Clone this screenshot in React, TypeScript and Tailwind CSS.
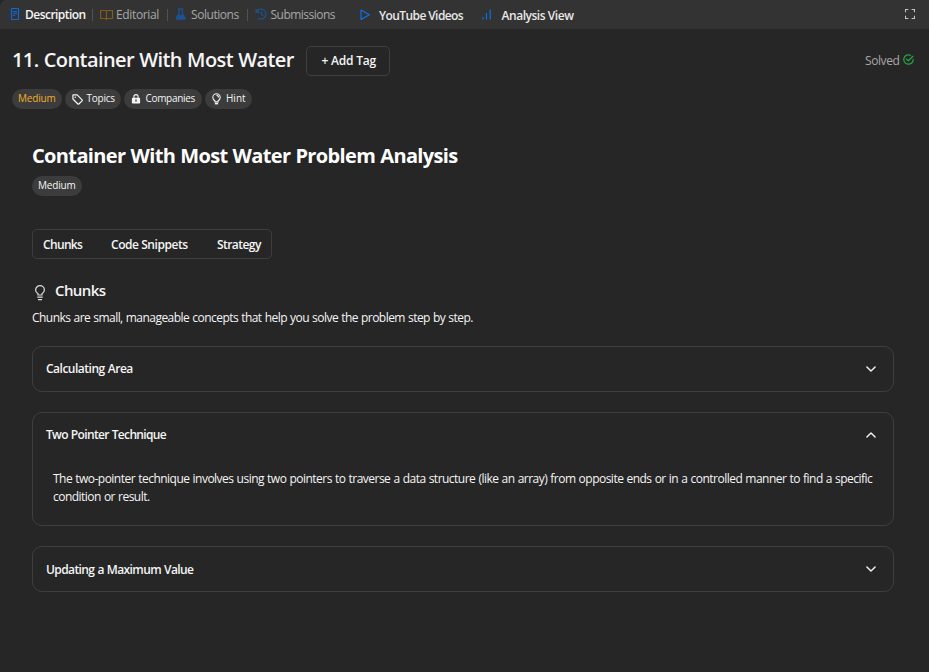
import type { ReactNode } from 'react';

type IconProps = { className?: string };

const DocIcon = ({ className }: IconProps) => (
  <svg className={className} width="10" height="12" viewBox="0 0 10 12" fill="none" stroke="currentColor">
    <rect x="1.5" y="0.5" width="7" height="11" rx="0.8" strokeWidth="1.2" />
    <path d="M3 3.5h4M3 5.5h4M3 7.5h2.2" />
  </svg>
);

const BookIcon = ({ className }: IconProps) => (
  <svg className={className} width="14" height="12" viewBox="0 0 14 12" fill="none" stroke="currentColor" strokeWidth="1.2" strokeLinejoin="round">
    <path d="M6.5 2.2C6.2 1.5 5.8 1.5 5.1 1.5H.6v8h4.5c.8 0 1.1.2 1.4.9.3-.7.7-.9 1.4-.9h4.6v-8H7.9c-.7 0-1.1 0-1.4.7zM6.5 2.2v8.2" />
  </svg>
);

const FlaskIcon = ({ className }: IconProps) => (
  <svg className={className} width="12" height="12" viewBox="0 0 12 12" fill="none" stroke="currentColor" strokeWidth="1.2">
    <path d="M2.9 .8h5.6M4.2 1v4L1.3 10c-.3.6 0 1.2.7 1.2h7.4c.7 0 1-.6.7-1.2L7.2 5V1" />
    <path d="M3.4 6.8h4.8l2 4.2H1.3z" fill="currentColor" stroke="none" />
  </svg>
);

const HistoryIcon = ({ className }: IconProps) => (
  <svg className={className} width="12" height="12" viewBox="0 0 12 12" fill="none" stroke="currentColor" strokeWidth="1.2">
    <path d="M1.1 1v3.2h3.2M1.4 4A5 5 0 1 1 3.2 10.3M6.4 3.5v3l2 1.3" />
  </svg>
);

const PlayIcon = ({ className }: IconProps) => (
  <svg className={className} width="11" height="12" viewBox="0 0 11 12" fill="none" stroke="currentColor" strokeLinejoin="round">
    <path d="M1 1l8.4 4.8L1 10.6z" strokeWidth="1.1" />
  </svg>
);

const BarsIcon = ({ className }: IconProps) => (
  <svg className={className} width="10" height="11" viewBox="0 0 10 11" fill="none" stroke="currentColor">
    <path d="M1 8v2.5M4.5 4v6.5M8.2 .5v10" strokeWidth="1.1" />
  </svg>
);

const ExpandIcon = ({ className }: IconProps) => (
  <svg className={className} width="10" height="10" viewBox="0 0 10 10" fill="none" stroke="currentColor">
    <path d="M.5 3.2V.5h2.9M6.6 .5h2.9v2.7M9.5 6.8v2.7H6.6M3.4 9.5H.5V6.8" strokeWidth="1.1" />
  </svg>
);

const SolvedIcon = ({ className }: IconProps) => (
  <svg className={className} width="11" height="11" viewBox="0 0 11 11" fill="none" stroke="currentColor" strokeWidth="1.25" strokeLinecap="round" strokeLinejoin="round">
    <path d="M7.6 1.3A4.7 4.7 0 1 0 10.2 5.4M3.6 5.2l1.7 1.6 4.6-4.5" />
  </svg>
);

const TagIcon = ({ className }: IconProps) => (
  <svg className={className} width="11" height="11" viewBox="0 0 11 11" fill="none" stroke="currentColor" strokeWidth="1.2" strokeLinejoin="round">
    <path d="M.9 1.5c0-.4.2-.6.6-.6h3.6l5 5c.3.3.3.6 0 .9L6.8 10c-.3.3-.6.3-.9 0l-5-5z" />
    <circle cx="3.3" cy="3.3" r="0.8" fill="currentColor" stroke="none" />
  </svg>
);

const LockIcon = ({ className }: IconProps) => (
  <svg className={className} width="10" height="10" viewBox="0 0 10 10" fill="none">
    <path d="M2.9 4V2.7a2.1 2.1 0 0 1 4.2 0V4" stroke="currentColor" strokeWidth="1.1" />
    <path fillRule="evenodd" fill="currentColor" d="M1.8 3.7h6.4c.5 0 .9.4.9.9v3.8c0 .6-.4 1-1 1H1.9c-.6 0-1-.4-1-1V4.6c0-.5.4-.9.9-.9zM5 5.3a.8.8 0 0 0-.5 1.4v1.1h1V6.7A.8.8 0 0 0 5 5.3z" />
  </svg>
);

const HintIcon = ({ className }: IconProps) => (
  <svg className={className} width="9" height="12" viewBox="0 0 9 12" fill="none" stroke="currentColor" strokeWidth="1.1">
    <path d="M2.9 8.9V7.7C1.6 6.9.8 5.8.8 4.5a3.7 3.7 0 0 1 7.4 0c0 1.3-.8 2.4-2.1 3.2v1.2zM4.5 2.4a2 2 0 0 1 2 2" />
    <path d="M2.9 10.6h3.2" strokeWidth="1.6" />
  </svg>
);

const BulbIcon = ({ className }: IconProps) => (
  <svg className={className} width="12" height="16" viewBox="0 0 12 16" fill="none" stroke="currentColor">
    <path d="M4 10V8.7C2.6 7.9 1.6 6.7 1.6 5.1a4.4 4.4 0 0 1 8.8 0C10.4 6.7 9.4 7.9 8 8.7V10z" strokeWidth="1.2" />
    <path d="M3.3 12.2h5.4M4 14.7h4" strokeWidth="1.2" />
  </svg>
);

const Chevron = ({ up }: { up?: boolean }) => (
  <svg className="-mt-px" width="12" height="8" viewBox="0 0 12 8" fill="none" stroke="currentColor" strokeWidth="1.4" strokeLinecap="round" strokeLinejoin="round">
    <path d={up ? 'M1.9 6L6 1.9 10.1 6' : 'M1.9 1.9L6 6l4.1-4.1'} />
  </svg>
);

const Divider = () => <div className="h-3 w-px shrink-0 bg-[#525252]" />;

function Pill({ icon, children, className }: { icon?: ReactNode; children: ReactNode; className: string }) {
  return (
    <div className={`flex h-5 items-center rounded-full bg-[#3c3c3c] text-[10px] font-medium leading-5 ${className}`}>
      {icon}
      <span className="-mt-0.5">{children}</span>
    </div>
  );
}

function Card({ title, titleClass, open, children, className }: { title: string; titleClass: string; open?: boolean; children?: ReactNode; className: string }) {
  return (
    <section className={`w-[862px] rounded-[10px] border border-[#3e3e3e] ${className}`}>
      <div className="flex h-11 items-center justify-between pl-[13px] pr-4">
        <h3 className={`text-[12px] font-semibold leading-[18px] [word-spacing:0.5px] ${titleClass}`}>{title}</h3>
        <Chevron up={open} />
      </div>
      {children}
    </section>
  );
}

export default function App() {
  return (
    <div className="h-[672px] w-[929px] overflow-hidden whitespace-nowrap bg-[#262626] font-['Open_Sans',sans-serif] text-[#f5f5f5]">
      <header className="flex h-[29px] items-center rounded-tl-md bg-[#333333] text-[12px] leading-[18px] text-[#a8a8a8]">
        <div className="flex w-[92px] items-center pl-2.5">
          <DocIcon className="-mt-px text-[#0a6ad8]" />
          <span className="ml-[5px] font-semibold tracking-[-0.53px] text-[#f5f5f5]">Description</span>
        </div>
        <Divider />
        <div className="flex w-[74px] items-center pl-[7px]">
          <BookIcon className="text-[#7d5d18]" />
          <span className="ml-0.5 tracking-[-0.36px]">Editorial</span>
        </div>
        <Divider />
        <div className="flex w-[79px] items-center pl-[7px]">
          <FlaskIcon className="-mt-px text-[#1b5394]" />
          <span className="ml-1 tracking-[-0.45px]">Solutions</span>
        </div>
        <Divider />
        <div className="flex w-[112px] items-center pl-[7px]">
          <HistoryIcon className="-mt-px text-[#1b5394]" />
          <span className="ml-[3.5px] tracking-[-0.52px]">Submissions</span>
        </div>
        <div className="flex w-[122px] items-center">
          <PlayIcon className="text-[#0a74f0]" />
          <span className="ml-2 mt-[3px] font-semibold tracking-[-0.59px] text-[#e8e8e8]">YouTube Videos</span>
        </div>
        <div className="flex items-center">
          <BarsIcon className="text-[#0a74f0]" />
          <span className="ml-[9.5px] mt-[3px] font-semibold tracking-[-0.46px] text-[#e8e8e8]">Analysis View</span>
        </div>
        <ExpandIcon className="-mt-0.5 ml-auto mr-3.5 text-[#c4c4c4]" />
      </header>

      <main>
        <div className="mt-[17px] flex h-[30px] items-center pl-3">
          <h1 className="-mt-0.5 w-[294px] text-[20px] font-semibold leading-[30px] tracking-[-0.58px] [word-spacing:0.5px]">11. Container With Most Water</h1>
          <button className="h-[30px] w-[84px] rounded-[5px] border border-[#404040] pl-[1.5px] text-[12px] font-semibold tracking-[-0.2px]">+ Add Tag</button>
          <div className="-mt-0.5 ml-auto mr-[15px] flex items-center text-[12px] text-[#a8a8a8]">
            <span className="mr-[3.5px] mt-px tracking-[-0.4px]">Solved</span>
            <SolvedIcon className="-mt-0.5 text-[#28a344]" />
          </div>
        </div>

        <div className="mt-[13px] flex gap-[3px] pl-3">
          <Pill className="w-[50px] pl-1.5 tracking-[-0.2px] text-[#f0ae2d]">Medium</Pill>
          <Pill className="w-14 pl-[7px] tracking-[-0.25px]" icon={<TagIcon className="mr-[3.5px]" />}>Topics</Pill>
          <Pill className="w-[78px] pl-[7px] tracking-[-0.32px]" icon={<LockIcon className="mr-[4.5px]" />}>Companies</Pill>
          <Pill className="w-[47px] pl-[7px]" icon={<HintIcon className="mr-[5px]" />}>Hint</Pill>
        </div>

        <article className="pl-8">
          <h2 className="mt-8 text-[20px] font-bold leading-[30px] tracking-[-0.64px] text-white [word-spacing:0.5px]">Container With Most Water Problem Analysis</h2>
          <Pill className="mt-[5px] w-[50px] pl-1.5 tracking-[-0.2px]">Medium</Pill>

          <div className="mt-[33px] flex h-[30px] w-60 items-center rounded-[5px] border border-[#3e3e3e] pl-2.5 pt-0.5 text-[12px] font-semibold">
            <span className="w-[68px] tracking-[-0.65px]">Chunks</span>
            <span className="w-[106px] tracking-[-0.45px]">Code Snippets</span>
            <span className="tracking-[-0.55px]">Strategy</span>
          </div>

          <div className="mt-5 flex h-6 items-center pl-0.5">
            <BulbIcon className="mt-1 text-[#dedede]" />
            <h3 className="-mt-0.5 ml-[9px] text-[15px] font-semibold leading-6 tracking-[-0.6px]">Chunks</h3>
          </div>
          <p className="mt-1.5 text-[12px] leading-[18px] tracking-[-0.54px] [word-spacing:0.5px]">Chunks are small, manageable concepts that help you solve the problem step by step.</p>

          <Card className="mt-[19px] h-[46px]" title="Calculating Area" titleClass="tracking-[-0.5px]" />
          <Card className="mt-5 h-[114px]" title="Two Pointer Technique" titleClass="tracking-[-0.66px]" open>
            <p className="mt-[13px] pl-5 text-[12px] leading-[18px] [word-spacing:0.5px]">
              <span className="tracking-[-0.518px]">The two-pointer technique involves using two pointers to traverse a data structure (like an array) from opposite ends or in a controlled manner to find a specific</span>
              <br />
              <span className="tracking-[-0.53px]">condition or result.</span>
            </p>
          </Card>
          <Card className="mt-5 h-[46px]" title="Updating a Maximum Value" titleClass="tracking-[-0.6px] pt-px" />
        </article>
      </main>
    </div>
  );
}
